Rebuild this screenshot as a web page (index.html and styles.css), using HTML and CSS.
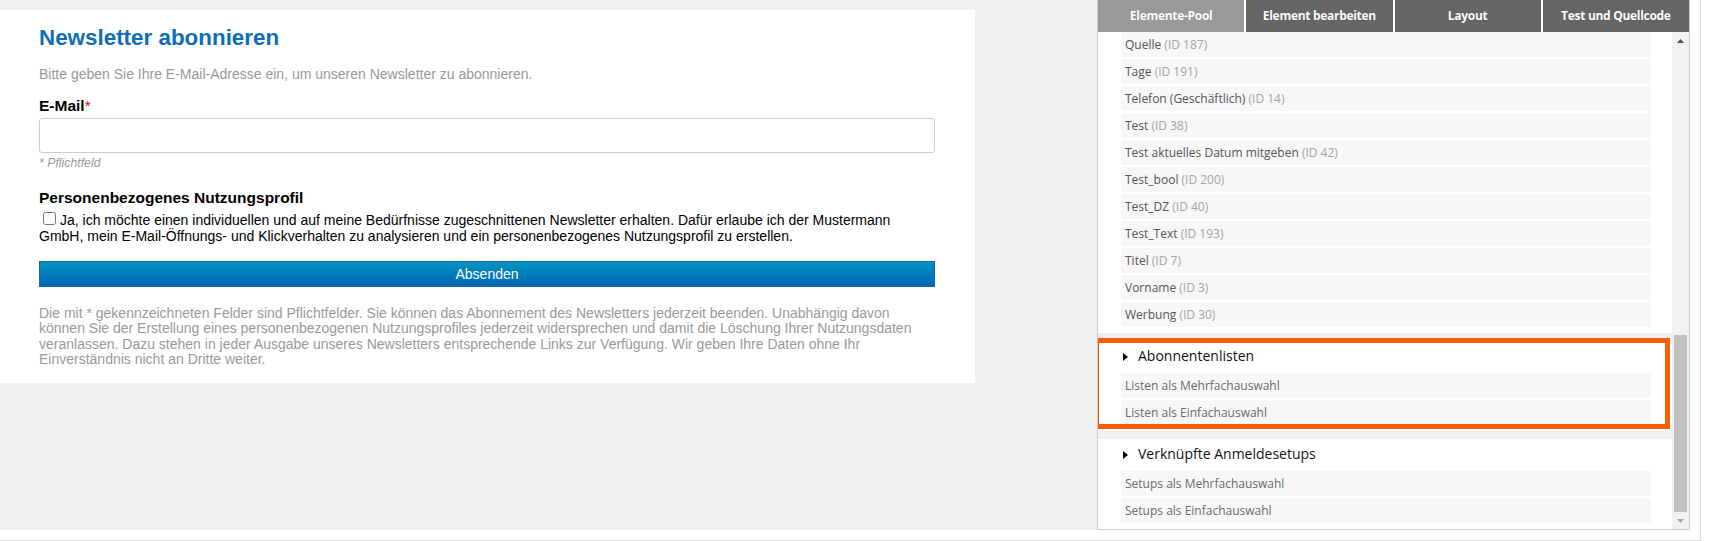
FILE: index.html
```html
<!doctype html>
<html lang="de">
    <head>
        <meta charset="UTF-8" />
        <meta name="viewport" content="width=device-width, initial-scale=1.0" />
        <title>Anmeldeformular bearbeiten</title>
        <link rel="stylesheet" href="styles.css">
    </head>
    <body>
        <div class="editor">
            <div class="preview">
                <form class="newsletter">
                    <h1 class="title">Newsletter abonnieren</h1>
                    <p class="intro">Bitte geben Sie Ihre E-Mail-Adresse ein, um unseren Newsletter zu abonnieren.</p>
                    <label class="label" for="email">E-Mail<span class="req">*</span></label>
                    <input class="field" id="email" type="text">
                    <div class="hint">* Pflichtfeld</div>
                    <h2 class="label profile">Personenbezogenes Nutzungsprofil</h2>
                    <label class="consent"><input class="check" type="checkbox">Ja, ich möchte einen individuellen und auf meine Bedürfnisse zugeschnittenen Newsletter erhalten. Dafür erlaube ich der Mustermann GmbH, mein E-Mail-Öffnungs- und Klickverhalten zu analysieren und ein personenbezogenes Nutzungsprofil zu erstellen.</label>
                    <button class="submit" type="button">Absenden</button>
                    <p class="legal">Die mit * gekennzeichneten Felder sind Pflichtfelder. Sie können das Abonnement des Newsletters jederzeit beenden. Unabhängig davon können Sie der Erstellung eines personenbezogenen Nutzungsprofiles jederzeit widersprechen und damit die Löschung Ihrer Nutzungsdaten veranlassen. Dazu stehen in jeder Ausgabe unseres Newsletters entsprechende Links zur Verfügung. Wir geben Ihre Daten ohne Ihr Einverständnis nicht an Dritte weiter.</p>
                </form>
            </div>

            <div class="panel">
                <div class="tabs">
                    <div class="tab active">Elemente-Pool</div>
                    <div class="tab">Element bearbeiten</div>
                    <div class="tab">Layout</div>
                    <div class="tab">Test und Quellcode</div>
                </div>
                <div class="pool-wrap">
                    <div class="pool">
                        <div class="group">
                            <div class="item">Quelle <span class="id">(ID 187)</span></div>
                            <div class="item">Tage <span class="id">(ID 191)</span></div>
                            <div class="item">Telefon (Geschäftlich) <span class="id">(ID 14)</span></div>
                            <div class="item">Test <span class="id">(ID 38)</span></div>
                            <div class="item">Test aktuelles Datum mitgeben <span class="id">(ID 42)</span></div>
                            <div class="item">Test_bool <span class="id">(ID 200)</span></div>
                            <div class="item">Test_DZ <span class="id">(ID 40)</span></div>
                            <div class="item">Test_Text <span class="id">(ID 193)</span></div>
                            <div class="item">Titel <span class="id">(ID 7)</span></div>
                            <div class="item">Vorname <span class="id">(ID 3)</span></div>
                            <div class="item">Werbung <span class="id">(ID 30)</span></div>
                        </div>
                        <div class="group marked">
                            <div class="group-title"><span class="caret"></span>Abonnentenlisten</div>
                            <div class="item light">Listen als Mehrfachauswahl</div>
                            <div class="item light">Listen als Einfachauswahl</div>
                        </div>
                        <div class="group">
                            <div class="group-title"><span class="caret"></span>Verknüpfte Anmeldesetups</div>
                            <div class="item light">Setups als Mehrfachauswahl</div>
                            <div class="item light">Setups als Einfachauswahl</div>
                        </div>
                    </div>
                    <div class="scrollbar">
                        <div class="arrow">
                            <svg width="7" height="4" viewBox="0 0 7 4"><polygon points="0,4 3.5,0 7,4" fill="#505050"/></svg>
                        </div>
                        <div class="track"></div>
                        <div class="thumb"></div>
                        <div class="arrow">
                            <svg width="7" height="4" viewBox="0 0 7 4"><polygon points="0,0 3.5,4 7,0" fill="#a3a3a3"/></svg>
                        </div>
                    </div>
                </div>
            </div>
        </div>
    </body>
</html>
```

FILE: styles.css
```css
body {
    margin: 0;
    background-color: #fff;
    font-family: "Liberation Sans", Arial, sans-serif;
}

.editor {
    display: flex;
    width: 1701px;
    height: 541px;
    box-sizing: border-box;
    padding: 0 10px 10px 0;
    border-right: 1px solid #ddd;
    border-bottom: 1px solid #ddd;
    background-color: #fff;
}

/* preview of the form */

.preview {
    flex: 1;
    padding-top: 10px;
    background-color: #f0f0f0;
}

.newsletter {
    width: 975px;
    box-sizing: border-box;
    padding: 15px 40px 15px 39px;
    background-color: #fff;
}

.title {
    margin: 0;
    font-size: 22.4px;
    line-height: 25px;
    font-weight: bold;
    color: #0d6db7;
}

.intro {
    margin: 16px 0 0;
    font-size: 14px;
    line-height: 16px;
    color: #999;
}

.label {
    display: block;
    margin: 15px 0 0;
    font-size: 15.5px;
    line-height: 17px;
    font-weight: bold;
    color: #000;
}

.req {
    color: #d0021b;
    font-weight: normal;
}

.field {
    display: block;
    width: 100%;
    height: 35px;
    box-sizing: border-box;
    margin-top: 4px;
    border: 1px solid #ccc;
    border-radius: 3px;
    background-color: #fff;
}

.hint {
    margin-top: 3px;
    font-size: 12.3px;
    line-height: 14px;
    font-style: italic;
    color: #999;
}

.label.profile {
    margin-top: 19px;
}

.consent {
    display: block;
    margin-top: 6px;
    font-size: 14px;
    line-height: 16px;
    color: #000;
}

.check {
    width: 13px;
    height: 13px;
    margin: 0 4px 0 4px;
    vertical-align: baseline;
}

.submit {
    display: block;
    width: 100%;
    height: 26px;
    margin-top: 17px;
    padding: 0;
    border: 1px solid #1167b1;
    background: linear-gradient(#0094c2, #0067b1);
    font-family: "Liberation Sans", Arial, sans-serif;
    font-size: 14px;
    color: #fff;
}

.legal {
    margin: 19px 0 0;
    font-size: 14px;
    line-height: 15.4px;
    color: #9a9a9a;
}

/* element pool panel */

.panel {
    display: flex;
    flex-direction: column;
    width: 593px;
    box-sizing: border-box;
    border: 1px solid #ccc;
    border-top: none;
    font-family: "Open Sans", sans-serif;
}

.tabs {
    display: flex;
    gap: 2px;
    background-color: #fff;
}

.tab {
    flex: 1;
    height: 32px;
    line-height: 32px;
    text-align: center;
    font-size: 12px;
    font-weight: bold;
    letter-spacing: -0.3px;
    color: #fff;
    background-color: #666;
    text-shadow: 0 0 1px rgba(0, 0, 0, 0.25);
}

.tab.active {
    background-color: #9a9a9a;
}

.pool-wrap {
    flex: 1;
    display: flex;
    min-height: 0;
}

.pool {
    flex: 1;
    display: flex;
    flex-direction: column;
    gap: 8px;
    overflow: hidden;
    background-color: #f0f0f0;
}

.group {
    position: relative;
    display: flex;
    flex-direction: column;
    gap: 2px;
    padding: 0 21px 6px 23px;
    background-color: #fff;
}

.group.marked::after {
    content: "";
    position: absolute;
    top: -3px;
    left: -4px;
    width: 576px;
    height: 91px;
    box-sizing: border-box;
    border: 5px solid #fe5c00;
}

.group-title {
    height: 30px;
    line-height: 30px;
    padding-left: 2px;
    font-size: 14px;
    color: #111;
}

.caret {
    display: inline-block;
    width: 0;
    height: 0;
    margin-right: 10px;
    border-left: 5px solid #000;
    border-top: 4px solid transparent;
    border-bottom: 4px solid transparent;
    vertical-align: 0;
}

.item {
    height: 25px;
    line-height: 25px;
    padding-left: 4px;
    font-size: 12px;
    color: #555;
    background-color: #f7f7f7;
}

.item.light {
    color: #6a6a6a;
}

.id {
    color: #a5a5a5;
}

.scrollbar {
    display: flex;
    flex-direction: column;
    width: 17px;
    background-color: #f1f1f1;
}

.arrow {
    display: flex;
    align-items: center;
    justify-content: center;
    height: 17px;
}

.track {
    flex: 1;
}

.thumb {
    height: 177px;
    margin: 0 2px;
    background-color: #c1c1c1;
}
```
